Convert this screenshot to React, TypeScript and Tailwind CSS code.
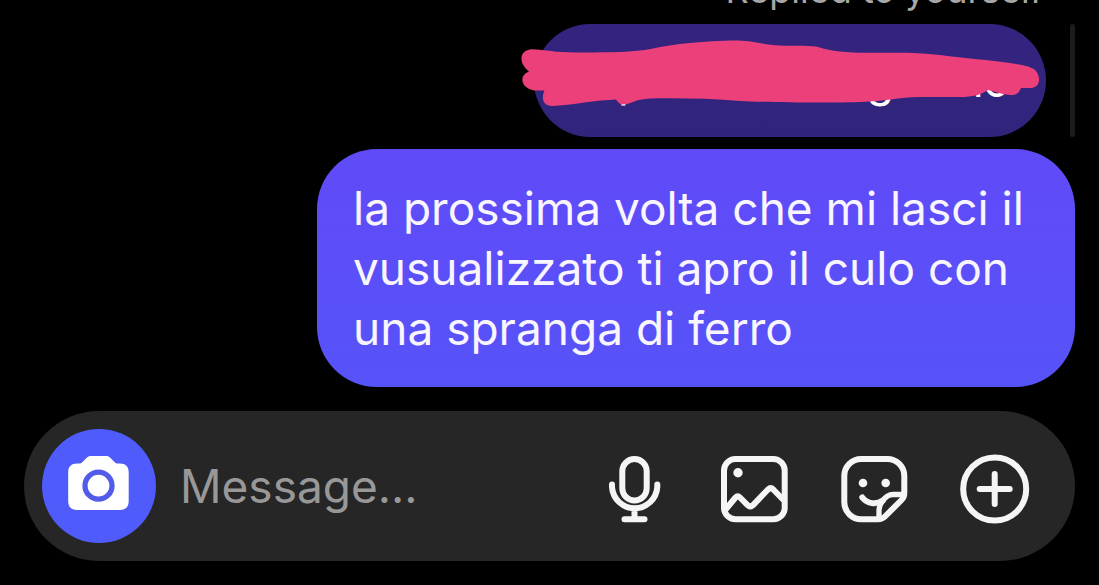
import { useState } from "react";
import type { ReactNode } from "react";

const CameraIcon = () => (
  <svg viewBox="0 0 64 64" className="size-16" aria-hidden="true">
    <path
      fill="#fff"
      d="M24 2h15c2 0 3 .5 4.300 1.800l4.200 4.200c1 1 2 1.500 3.500 1.500h2c5.500 0 8.700 3.300 8.700 8.700V47c0 6-3.200 9-9 9H10.200c-5.800 0-9-3-9-9V18.200c0-5.400 3.200-8.700 8.700-8.700h2c1.500 0 2.600-.5 3.600-1.500l4.200-4.200C21 2.500 22 2 24 2z"
    />
    <circle cx="31.500" cy="31.700" r="13.500" fill="none" stroke="#535bea" strokeWidth="5.300" />
  </svg>
);

const Icon = ({ children }: { children: ReactNode }) => (
  <svg
    viewBox="0 0 80 80"
    className="size-20"
    fill="none"
    stroke="currentColor"
    strokeWidth="6"
    strokeLinecap="round"
    strokeLinejoin="round"
    aria-hidden="true"
  >
    {children}
  </svg>
);

const actions = [
  {
    label: "Voice message",
    icon: (
      <Icon>
        <rect x="27.300" y="13" width="24.400" height="41.500" rx="12.200" />
        <path d="M17 38.500V41a22.700 22.700 0 0 0 45.300 0v-2.500M39.500 64v9M29.500 73.300h20" />
      </Icon>
    ),
  },
  {
    label: "Photo",
    icon: (
      <Icon>
        <rect x="9" y="13" width="60.700" height="60.300" rx="11.500" />
        <circle cx="23" cy="26.700" r="4.700" fill="currentColor" stroke="none" />
        <path d="M11 63l9.500-11.500q2.200-2.300 4.500 0l7.800 7.800q2.500 2.200 5 0L53 43.500q2.700-2.500 5.300 0L68.500 54" />
      </Icon>
    ),
  },
  {
    label: "Sticker",
    icon: (
      <Icon>
        <path d="M69.300 47V30a17 17 0 0 0-17-17h-26a17 17 0 0 0-17 17v26.300a17 17 0 0 0 17 17H43c3 0 5-.8 7-2.800L66.500 54c2-2 2.800-4 2.800-7z" />
        <path strokeWidth="5.300" d="M68 48.500H58c-5 0-8 3-10.500 6.500C45 58 44 61 44 65V72" />
        <path d="M27.300 51.500c5 6.500 14 7.500 20.500 3" />
        <circle cx="28" cy="37" r="4.300" fill="currentColor" stroke="none" />
        <circle cx="50.700" cy="37" r="4.300" fill="currentColor" stroke="none" />
      </Icon>
    ),
  },
  {
    label: "More",
    icon: (
      <Icon>
        <circle cx="39.700" cy="43" r="31.500" />
        <path d="M39.700 28v30M24.700 43h30" />
      </Icon>
    ),
  },
];

const Scribble = () => (
  <svg
    viewBox="520 36 524 74"
    className="absolute -left-[14px] top-3 h-[74px] w-[524px]"
    aria-hidden="true"
  >
    <path
      fill="#ec407a"
      d="M532 49.300C545 50 556 52.500 575 52.500C600 52.500 625 52.500 645 50C660 47 670 45 685 43.500C705 41.500 720 40.500 738 40.500C755 41 765 45 780 45.500C795 46 805 45 816 46.500C825 49.500 840 52.500 860 52.800C885 53 915 51.500 940 55C965 58.500 990 60 1010 63C1022 65 1030 66 1035 70C1041 76 1041 87 1031 88H1021C1019 93 1016 95.500 1010 95C1000 94 993 91 988 90C980 95 973 97 960 97H918C905 97 890 100 870 101.500C840 103.500 770 102.500 740 101C710 98.500 680 98 650 98.500C635 99 631 104.500 622 104.500C619 104 618 102 616 99.500C597 100 572 105 552 106C543 106 541 98 544.500 90.500H534C520 88 519 75 529 71.500C518 63 519 50 532 49.300Z"
    />
  </svg>
);

export default function App() {
  const [message, setMessage] = useState("");

  return (
    <main className="flex h-screen flex-col justify-end overflow-hidden bg-black px-6 pb-6 font-['Inter',sans-serif] text-[#f5f5f5]">
      <section className="flex shrink-0 flex-col items-end">
        <p className="mr-8 text-[36px] leading-10 text-[#a8a8a8]">Replied to yourself</p>

        {/* Quoted message */}
        <div className="mt-[14px] flex items-stretch gap-6">
          <div className="relative flex h-[113px] w-[512px] items-center justify-end rounded-full bg-linear-to-b from-[#36237f] to-[#2f257c] px-9 text-[44px] leading-none text-white">
            <span className="mr-auto pl-12">p</span>
            <span className="mr-16">g</span>
            <span>no</span>
            <Scribble />
          </div>
          <div className="w-[5px] rounded-full bg-[#1c1c1c]" />
        </div>

        <p className="mt-3 w-[758px] max-w-full rounded-[60px] bg-linear-to-b from-[#604af8] to-[#5653f8] px-9 py-[29px] text-[46px] leading-[60px] text-[#f8f5ff]">
          la prossima volta che mi lasci il vusualizzato ti apro il culo con una spranga di ferro
        </p>
      </section>

      <form
        onSubmit={(e) => e.preventDefault()}
        className="mt-6 flex shrink-0 items-center rounded-full bg-[#262626] py-[18px] pr-10 pl-[18px]"
      >
        <button
          type="button"
          aria-label="Camera"
          className="flex size-[114px] shrink-0 items-center justify-center rounded-full bg-[#4f5bfa]"
        >
          <CameraIcon />
        </button>
        <input
          type="text"
          aria-label="Message"
          placeholder="Message…"
          value={message}
          onChange={(e) => setMessage(e.target.value)}
          className="ml-6 min-w-0 flex-1 bg-transparent text-[46px] leading-[60px] outline-none placeholder:text-[#989898]"
        />
        <div className="flex shrink-0 gap-10">
          {actions.map(({ label, icon }) => (
            <button key={label} type="button" aria-label={label}>
              {icon}
            </button>
          ))}
        </div>
      </form>
    </main>
  );
}
